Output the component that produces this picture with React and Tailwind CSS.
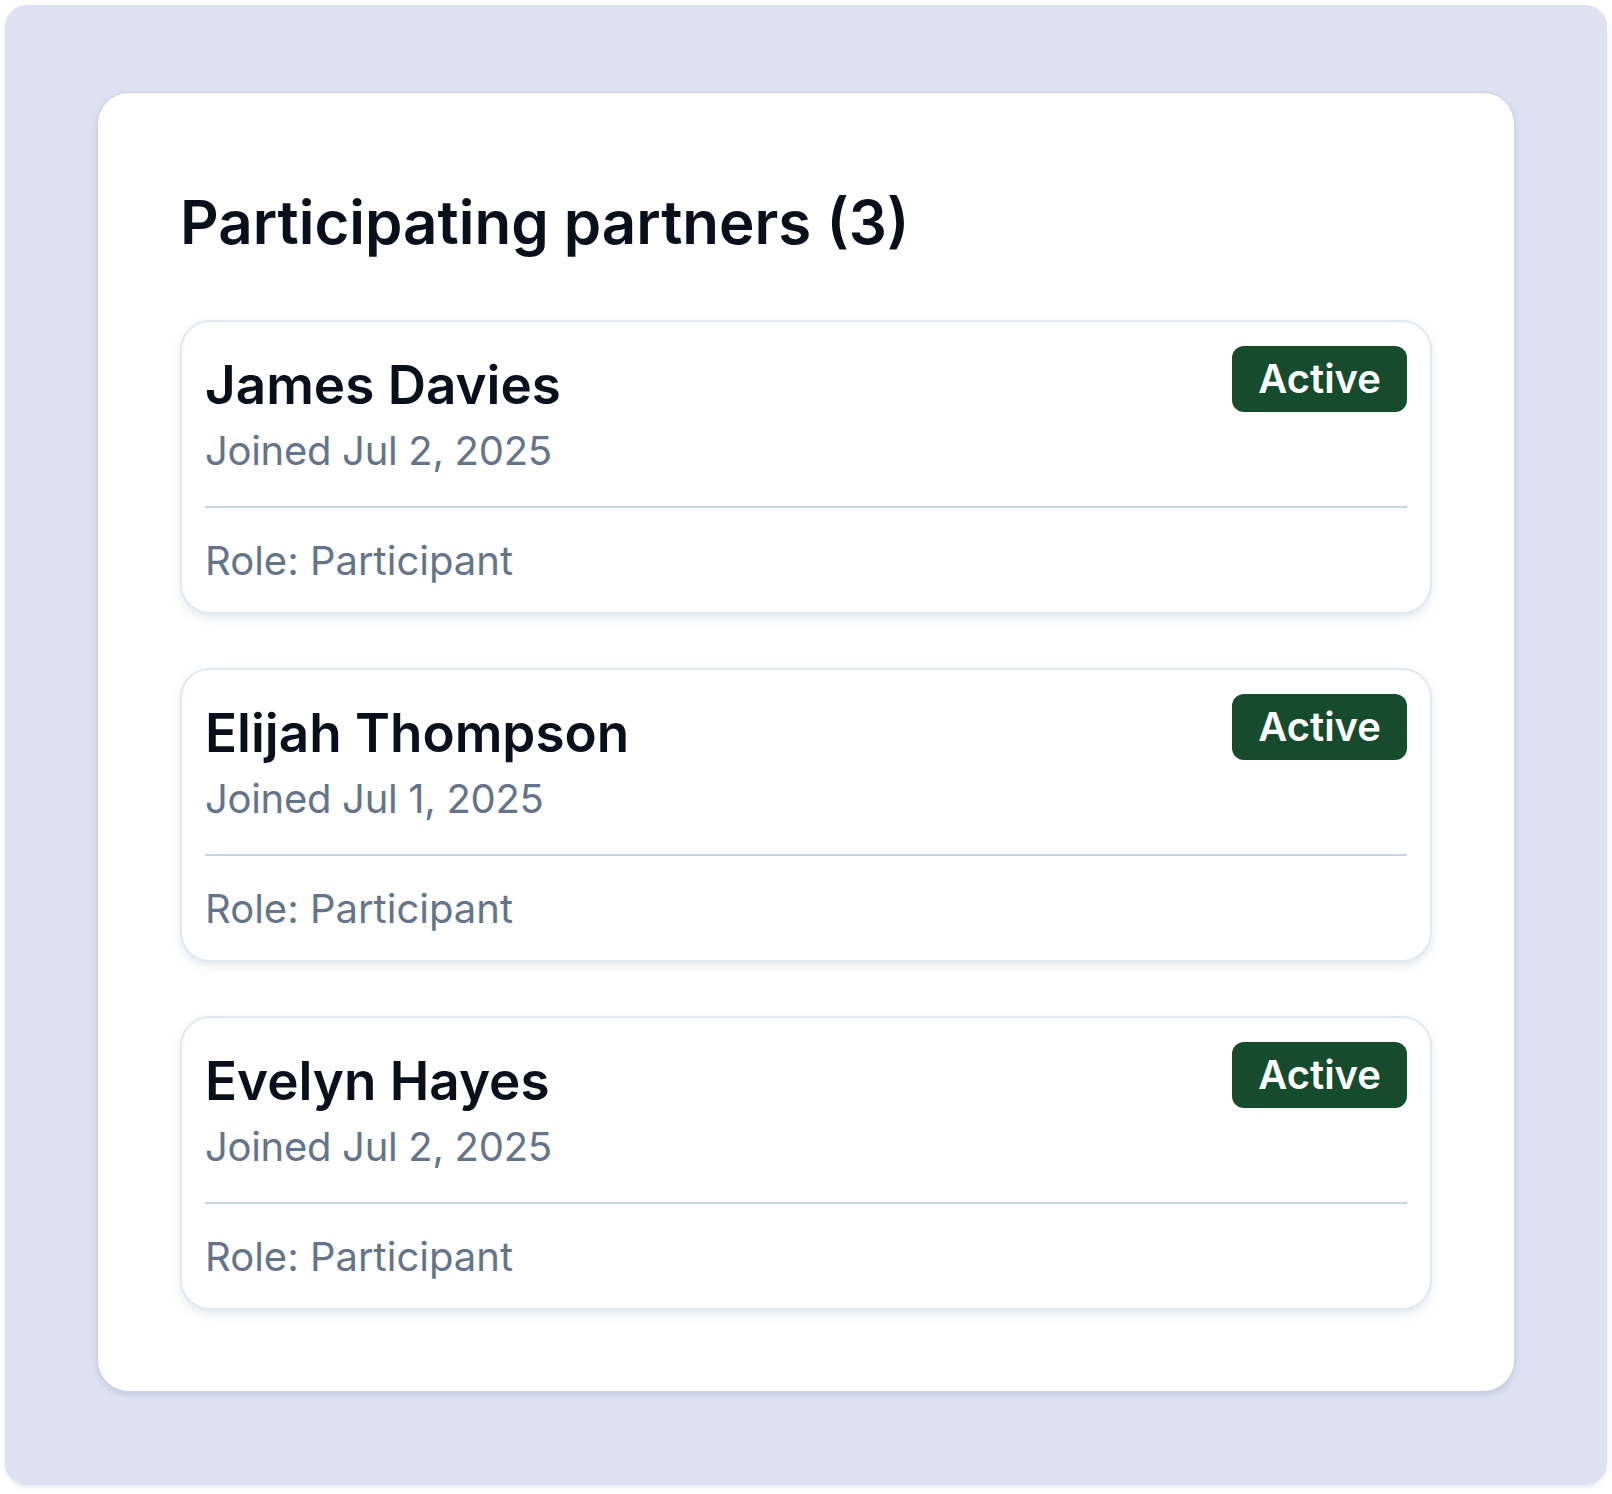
import React from 'react';

const partners = [
  { name: 'James Davies', joined: 'Jul 2, 2025' },
  { name: 'Elijah Thompson', joined: 'Jul 1, 2025' },
  { name: 'Evelyn Hayes', joined: 'Jul 2, 2025' },
];

const PartnerCard = ({ name, joined }) => (
  <div className="rounded-[30px] border-2 border-[#e2e8f0] bg-white px-[23px] pt-[24px] pb-[26px] shadow-[0_4px_8px_rgba(148,163,184,0.25)]">
    <div className="flex items-start justify-between">
      <div>
        <p className="text-[53px] leading-[78px] font-semibold text-[#0b0f1c]">{name}</p>
        <p className="text-[40px] leading-[53px] text-[#64748b] tracking-[-0.3px]">Joined {joined}</p>
      </div>
      <span className="flex h-[66px] items-center rounded-[12px] bg-[#174b2d] px-[26px] text-[40px] font-semibold text-white">
        Active
      </span>
    </div>
    <div className="mt-[29px] h-[2px] bg-[#cbd5e1]" />
    <p className="mt-[27px] text-[40px] leading-[51px] text-[#64748b]">Role: Participant</p>
  </div>
);

export default function App() {
  return (
    <div className="min-h-screen bg-white p-[5px]" style={{ fontFamily: 'Inter, "Noto Sans", sans-serif' }}>
      <div className="h-[1480px] rounded-[22px] bg-[#dfe1f3] px-[92px] pt-[87px] shadow-[0_2px_4px_rgba(100,110,150,0.15)]">
        <div className="rounded-[32px] border border-[#cfd3df] bg-white px-[82px] pt-[96px] pb-[81px] shadow-[0_3px_6px_rgba(120,130,170,0.25)]">
          <h1 className="text-[60px] leading-[67px] font-semibold text-[#0b0f1c]">Participating partners (3)</h1>
          <div className="mt-[64px] flex flex-col gap-[54px]">
            {partners.map((p) => (
              <PartnerCard key={p.name} {...p} />
            ))}
          </div>
        </div>
      </div>
    </div>
  );
}
